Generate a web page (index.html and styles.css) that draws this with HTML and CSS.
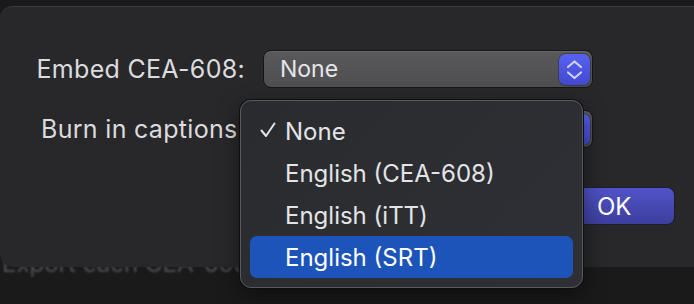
FILE: index.html
```html
<!DOCTYPE html>
<html lang="en">
<head>
  <meta charset="UTF-8">
  <title>Captions</title>
  <link rel="stylesheet" href="styles.css">
</head>
<body>
  <div class="sheet">
    <div class="form">
      <label class="label">Embed CEA-608:</label>
      <div class="popup">
        <span class="popup-value">None</span>
        <span class="stepper">
          <svg width="30" height="31" viewBox="0 0 30 31"><path d="M9 13 L15.5 7.5 L22 13 M9 18.5 L15.5 24 L22 18.5" fill="none" stroke="#cfd0ff" stroke-width="2.2" stroke-linecap="round" stroke-linejoin="round"/></svg>
        </span>
      </div>

      <label class="label">Burn in captions:</label>
      <div class="popup">
        <span class="popup-value">None</span>
        <span class="stepper"></span>
      </div>
    </div>

    <div class="actions">
      <button class="btn-ok">OK</button>
    </div>

    <div class="menu">
      <div class="menu-item checked">
        <svg class="check" width="16" height="16" viewBox="0 0 16 16"><path d="M1.5 8.5 L6 14 L14.5 1.5" fill="none" stroke="#e4e4e6" stroke-width="2" stroke-linecap="round" stroke-linejoin="round"/></svg>
        <span>None</span>
      </div>
      <div class="menu-item"><span>English (CEA-608)</span></div>
      <div class="menu-item"><span>English (iTT)</span></div>
      <div class="menu-item selected"><span>English (SRT)</span></div>
    </div>
  </div>
  <div class="behind">Export each CEA-608 caption as a separate file</div>
</body>
</html>
```
FILE: styles.css
```css
body {
  margin: 0;
  height: 304px;
  overflow: hidden;
  background-color: #1a1a1b;
  font-family: Inter, "Liberation Sans", sans-serif;
  color: #e0e0e2;
  padding-top: 6px;
  box-sizing: border-box;
}
.sheet {
  position: relative;
  z-index: 1;
  width: 720px;
  height: 261px;
  background-color: #28282a;
  border-top: 1px solid #3b3b3d;
  border-radius: 13px 0 0 13px;
  box-sizing: border-box;
  padding-top: 43px;
}
.form {
  display: grid;
  grid-template-columns: 245px 330px;
  column-gap: 18px;
  row-gap: 22px;
  align-items: center;
}
.label {
  text-align: right;
  font-size: 25px;
  letter-spacing: 0.3px;
  color: #dcdcde;
}
.popup {
  height: 38px;
  box-sizing: border-box;
  border: 1px solid #161617;
  border-radius: 8px;
  background: linear-gradient(#59595b, #4f4f51);
  box-shadow: inset 0 1px 0 rgba(255,255,255,0.08);
  display: flex;
  align-items: center;
  justify-content: space-between;
  padding: 0 2px 0 16px;
}
.popup-value {
  font-size: 23px;
  color: #e6e6e8;
}
.stepper {
  width: 31px;
  height: 31px;
  border-radius: 7px;
  background: linear-gradient(#5862f2, #4248d2);
  box-shadow: 0 0 0 1px rgba(0,0,0,0.25);
}
.stepper svg {
  display: block;
}
.actions {
  display: flex;
  justify-content: flex-end;
  width: 675px;
  margin-top: 39px;
}
.btn-ok {
  width: 123px;
  height: 38px;
  border: 1px solid #1d1d2e;
  border-radius: 8px;
  background: linear-gradient(#5053c6, #3d3f9e);
  color: #ffffff;
  font-family: inherit;
  font-size: 24px;
  text-align: left;
  padding-left: 44px;
}
.menu {
  position: absolute;
  left: 240px;
  top: 93px;
  width: 343px;
  height: 188px;
  box-sizing: border-box;
  padding: 9px;
  background: linear-gradient(135deg, #2a2b2e, #2e3036);
  border: 1px solid #5a5a5e;
  border-radius: 11px;
  box-shadow: 0 0 0 1px #0e0e10, 0 8px 24px rgba(0,0,0,0.45);
}
.menu-item {
  height: 42px;
  display: flex;
  align-items: center;
  padding-left: 35px;
  border-radius: 7px;
  font-size: 24px;
  color: #e4e4e6;
}
.menu-item.checked {
  padding-left: 10px;
  gap: 9px;
}
.check {
  width: 16px;
  height: 16px;
  margin-top: -2px;
}
.menu-item.selected {
  background-color: #1d54ba;
  color: #ffffff;
}
.behind {
  margin-top: -18px;
  padding-left: 2px;
  font-size: 24px;
  color: #505052;
  filter: blur(0.8px);
}
```
